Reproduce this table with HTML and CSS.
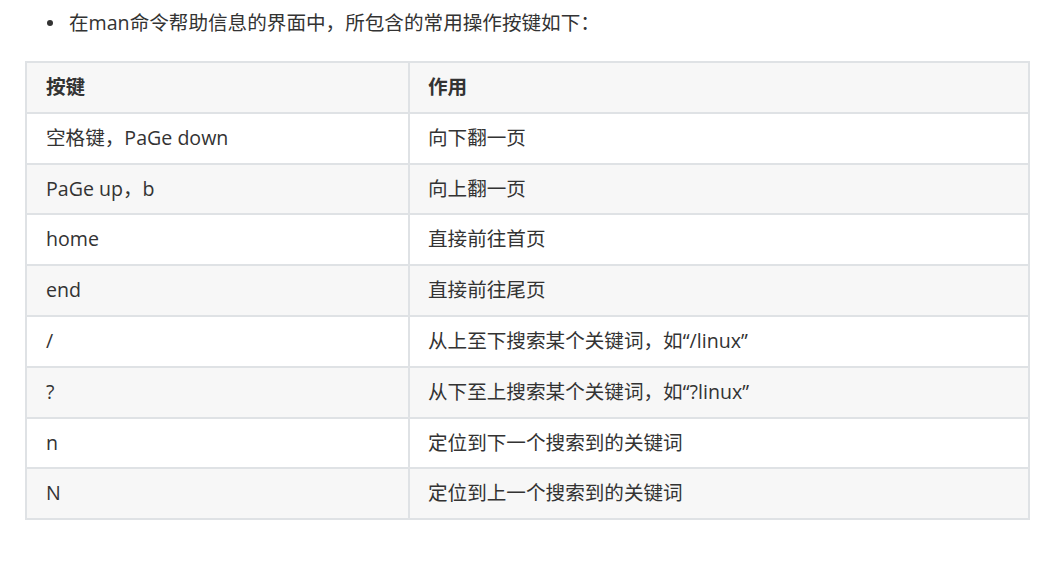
FILE: index.html
```html
<!DOCTYPE html>
<html lang="zh-CN">
<head>
<meta charset="utf-8">
<title>man 命令操作按键</title>
<link rel="stylesheet" href="styles.css">
</head>
<body>
<div class="page">
  <div class="bullet-line">
    <span class="dot"></span>
    <span class="bullet-text">在man命令帮助信息的界面中，所包含的常用操作按键如下：</span>
  </div>
  <table class="keys">
    <colgroup>
      <col class="c1">
      <col class="c2">
    </colgroup>
    <thead>
      <tr><th>按键</th><th>作用</th></tr>
    </thead>
    <tbody>
      <tr><td>空格键，PaGe down</td><td>向下翻一页</td></tr>
      <tr><td>PaGe up，b</td><td>向上翻一页</td></tr>
      <tr><td>home</td><td>直接前往首页</td></tr>
      <tr><td>end</td><td>直接前往尾页</td></tr>
      <tr><td>/</td><td>从上至下搜索某个关键词，如“/linux”</td></tr>
      <tr><td>?</td><td>从下至上搜索某个关键词，如“?linux”</td></tr>
      <tr><td>n</td><td>定位到下一个搜索到的关键词</td></tr>
      <tr><td>N</td><td>定位到上一个搜索到的关键词</td></tr>
    </tbody>
  </table>
</div>
</body>
</html>
```

FILE: styles.css
```css
html, body {
  margin: 0;
  padding: 0;
  background: #ffffff;
}

body {
  font-family: "Open Sans", "Noto Sans CJK SC", sans-serif;
  font-size: 19.6px;
  color: #333333;
}

.page {
  padding: 8px 27px 0 25px;
}

.bullet-line {
  display: flex;
  align-items: center;
  height: 29px;
  margin-bottom: 24px;
}

.dot {
  width: 6px;
  height: 6px;
  border-radius: 50%;
  background: #333333;
  margin-left: 22px;
  margin-right: 16px;
  flex: none;
}

.bullet-text {
  line-height: 29px;
  white-space: nowrap;
}

.keys {
  width: 1005px;
  border-collapse: collapse;
  table-layout: fixed;
}

.c1 { width: 383px; }

.keys th,
.keys td {
  border: 2px solid #dfe2e5;
  text-align: left;
  padding: 9px 18px 9px 19px;
  line-height: 30.8px;
  white-space: nowrap;
}

.keys td:nth-child(2),
.keys th:nth-child(2) {
  padding-left: 18px;
}

.keys th {
  font-weight: 700;
  background: #f7f7f7;
}

.keys tbody tr:nth-child(even) {
  background: #f7f7f7;
}

.keys tbody tr:nth-child(odd) {
  background: #ffffff;
}
```
